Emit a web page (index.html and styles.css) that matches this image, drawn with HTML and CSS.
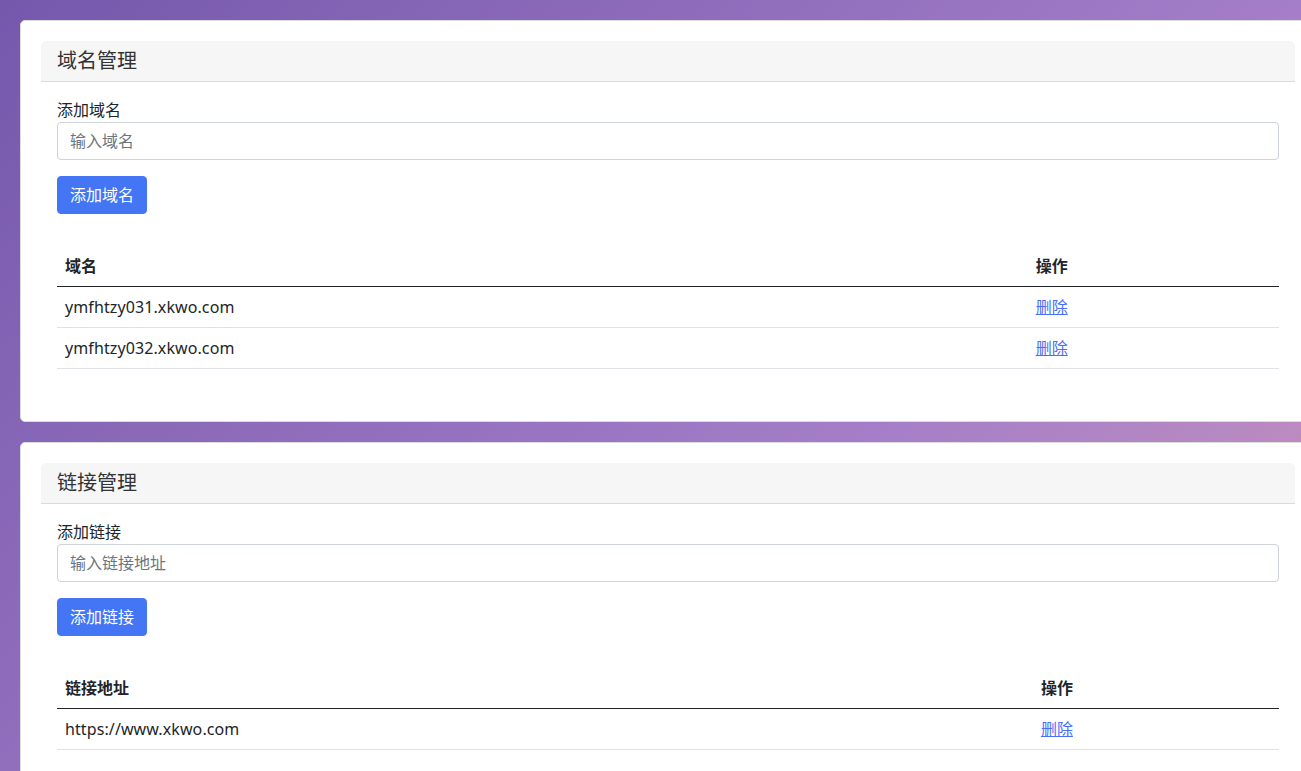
FILE: index.html
```html
<!DOCTYPE html>
<html lang="zh-CN">
<head>
<meta charset="utf-8">
<title>管理</title>
<link rel="stylesheet" href="styles.css">
</head>
<body>
<main class="page">
  <section class="card">
    <div class="card-header">域名管理</div>
    <div class="card-body">
      <label class="form-label" for="domain">添加域名</label>
      <input class="form-control" id="domain" type="text" placeholder="输入域名">
      <button class="btn" type="button">添加域名</button>
      <table class="table">
        <thead>
          <tr><th>域名</th><th>操作</th></tr>
        </thead>
        <tbody>
          <tr><td>ymfhtzy031.xkwo.com</td><td><a href="#">删除</a></td></tr>
          <tr><td>ymfhtzy032.xkwo.com</td><td><a href="#">删除</a></td></tr>
        </tbody>
      </table>
    </div>
  </section>
  <section class="card">
    <div class="card-header">链接管理</div>
    <div class="card-body">
      <label class="form-label" for="link">添加链接</label>
      <input class="form-control" id="link" type="text" placeholder="输入链接地址">
      <button class="btn" type="button">添加链接</button>
      <table class="table">
        <thead>
          <tr><th>链接地址</th><th>操作</th></tr>
        </thead>
        <tbody>
          <tr><td>https://www.xkwo.com</td><td><a href="#">删除</a></td></tr>
        </tbody>
      </table>
    </div>
  </section>
</main>
</body>
</html>
```

FILE: styles.css
```css
html {
  overflow: hidden;
}

body {
  margin: 0;
  font-family: "Noto Sans", "Noto Sans CJK SC", sans-serif;
  font-size: 16px;
  line-height: 24px;
  color: #212529;
  background: linear-gradient(135deg, #7558ac 0%, #a47ec8 63%, #cd95ba 100%) fixed;
  min-height: 100vh;
}

.page {
  padding: 20px;
  display: flex;
  flex-direction: column;
  gap: 20px;
}

.card {
  width: 1296px;
  box-sizing: border-box;
  background: #fff;
  border: 1px solid #dcdcdc;
  border-radius: 5px;
  padding: 20px;
}

.card-header {
  background: #f6f6f6;
  border-bottom: 1px solid #dadada;
  border-radius: 5px 5px 0 0;
  padding: 8px 16px;
  font-size: 20px;
  line-height: 24px;
  color: #333;
}

.card-body {
  padding: 16px;
}

.form-label {
  display: block;
  font-size: 16px;
  line-height: 24px;
}

.form-control {
  display: block;
  width: 100%;
  box-sizing: border-box;
  height: 38px;
  padding: 6px 12px;
  font-family: inherit;
  font-size: 16px;
  line-height: 24px;
  color: #212529;
  border: 1px solid #ced4da;
  border-radius: 4px;
  background: #fff;
  margin: 0;
}

.form-control::placeholder {
  color: #6c757d;
}

.btn {
  display: inline-block;
  margin-top: 16px;
  padding: 6px 12px;
  font-family: inherit;
  font-size: 16px;
  line-height: 24px;
  color: #fff;
  background: #4375f5;
  border: 1px solid #4375f5;
  border-radius: 4px;
}

.table {
  width: 100%;
  border-collapse: collapse;
  margin-top: 32px;
  margin-bottom: 16px;
}

.table th,
.table td {
  padding: 8px;
  text-align: left;
  border-bottom: 1px solid #dee2e6;
}

.table td:first-child {
  letter-spacing: 0.1px;
}

.table th {
  font-weight: 700;
  border-bottom: 1px solid #212529;
}

.table a {
  color: #4a6ef5;
  text-decoration: underline;
}
```
